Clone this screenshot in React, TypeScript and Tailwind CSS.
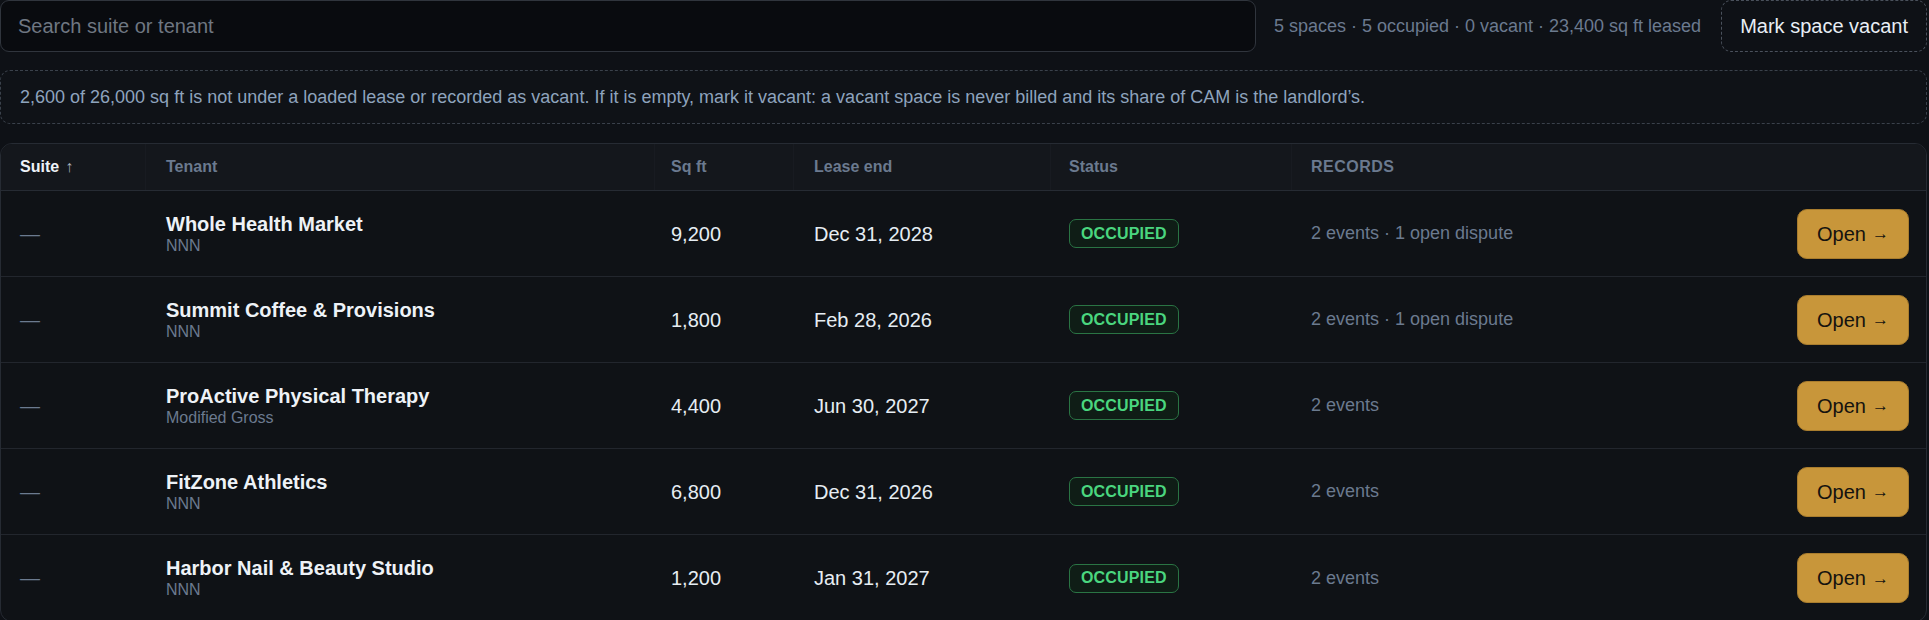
import { useState } from "react";

type Space = {
  suite: string;
  tenant: string;
  leaseType: string;
  sqft: string;
  leaseEnd: string;
  records: string;
};

const spaces: Space[] = [
  { suite: "—", tenant: "Whole Health Market", leaseType: "NNN", sqft: "9,200", leaseEnd: "Dec 31, 2028", records: "2 events · 1 open dispute" },
  { suite: "—", tenant: "Summit Coffee & Provisions", leaseType: "NNN", sqft: "1,800", leaseEnd: "Feb 28, 2026", records: "2 events · 1 open dispute" },
  { suite: "—", tenant: "ProActive Physical Therapy", leaseType: "Modified Gross", sqft: "4,400", leaseEnd: "Jun 30, 2027", records: "2 events" },
  { suite: "—", tenant: "FitZone Athletics", leaseType: "NNN", sqft: "6,800", leaseEnd: "Dec 31, 2026", records: "2 events" },
  { suite: "—", tenant: "Harbor Nail & Beauty Studio", leaseType: "NNN", sqft: "1,200", leaseEnd: "Jan 31, 2027", records: "2 events" },
];

const cols = "grid grid-cols-[145px_509px_139px_257px_241px_1fr]";

export default function App() {
  const [query, setQuery] = useState("");

  const rows = spaces.filter((s) =>
    (s.suite + " " + s.tenant).toLowerCase().includes(query.trim().toLowerCase())
  );

  return (
    <main className="min-h-screen w-full bg-[#0e1116] font-['Liberation_Sans',Arial,sans-serif] text-[#e6edf3]">
      {/* toolbar */}
      <div className="flex items-center gap-[18px] pr-[2px]">
        <input
          value={query}
          onChange={(e) => setQuery(e.target.value)}
          placeholder="Search suite or tenant"
          className="h-[52px] flex-1 rounded-[9px] border border-[#30353d] bg-[#090b0f] px-[17px] text-[20px] text-[#e6edf3] outline-none placeholder:text-[#6f7782]"
        />
        <span className="whitespace-nowrap text-[18px] text-[#6b7a8f]">
          5 spaces · 5 occupied · 0 vacant · 23,400 sq ft leased
        </span>
        <button
          type="button"
          className="ml-[2px] h-[52px] whitespace-nowrap rounded-[10px] border border-dashed border-[#4a515c] bg-[#0e1116] px-[18px] text-[20px] text-[#e8eef5]"
        >
          Mark space vacant
        </button>
      </div>

      {/* unaccounted space notice */}
      <div className="mt-[18px] mr-[2px] flex h-[54px] items-center rounded-[10px] border border-dashed border-[#3a414b] bg-[#0f1217] px-[19px] text-[18px] text-[#8ea3bd]">
        2,600 of 26,000 sq ft is not under a loaded lease or recorded as vacant. If it is empty, mark it vacant: a vacant space is never billed and its share of CAM is the landlord’s.
      </div>

      {/* spaces table */}
      <div className="mt-[19px] mr-[2px] overflow-hidden rounded-[12px] border border-[#262b33] bg-[#0f1216]">
        <div className={`${cols} h-[47px] items-stretch border-b border-[#262b33] bg-[#14171c] text-[16px] font-bold`}>
          <div className="flex items-center gap-[6px] border-r border-[#181b21] px-[19px] text-[#eef2f7]">
            Suite <span className="text-[16px] font-normal text-[#a9b1bc]">↑</span>
          </div>
          <div className="flex items-center border-r border-[#181b21] px-[20px] text-[#6b7a8f]">Tenant</div>
          <div className="flex items-center border-r border-[#181b21] px-[16px] text-[#6b7a8f]">Sq ft</div>
          <div className="flex items-center border-r border-[#181b21] px-[20px] text-[#6b7a8f]">Lease end</div>
          <div className="flex items-center border-r border-[#181b21] px-[18px] text-[#6b7a8f]">Status</div>
          <div className="flex items-center px-[19px] tracking-[0.03em] text-[#6b7a8f]">RECORDS</div>
        </div>

        {rows.map((s, i) => (
          <div
            key={s.tenant}
            className={`${cols} h-[86px] items-center ${i < rows.length - 1 ? "border-b border-[#22262d]" : ""}`}
          >
            <div className="px-[19px] text-[20px] text-[#6b7a8f]">{s.suite}</div>
            <div className="flex flex-col px-[20px]">
              <span className="text-[20px] font-bold leading-[24px] text-[#eef2f7]">{s.tenant}</span>
              <span className="text-[16px] leading-[20px] text-[#6b7a8f]">{s.leaseType}</span>
            </div>
            <div className="px-[16px] text-[20px]">{s.sqft}</div>
            <div className="px-[20px] text-[20px]">{s.leaseEnd}</div>
            <div className="px-[18px]">
              <span className="inline-flex h-[29px] items-center rounded-[7px] border border-[#2a7444] bg-[#0f1d16] px-[11px] text-[16px] font-bold tracking-[0.01em] text-[#4ad67f]">
                OCCUPIED
              </span>
            </div>
            <div className="flex items-center justify-between pl-[19px] pr-[17px]">
              <span className="text-[18px] text-[#6b7a8f]">{s.records}</span>
              <button
                type="button"
                className="inline-flex h-[50px] items-center gap-[6px] rounded-[10px] border border-[#a97d2e] bg-[#c8963a] px-[19px] text-[20px] text-[#15130f]"
              >
                Open <span className="text-[17px] leading-none">→</span>
              </button>
            </div>
          </div>
        ))}
      </div>
    </main>
  );
}
